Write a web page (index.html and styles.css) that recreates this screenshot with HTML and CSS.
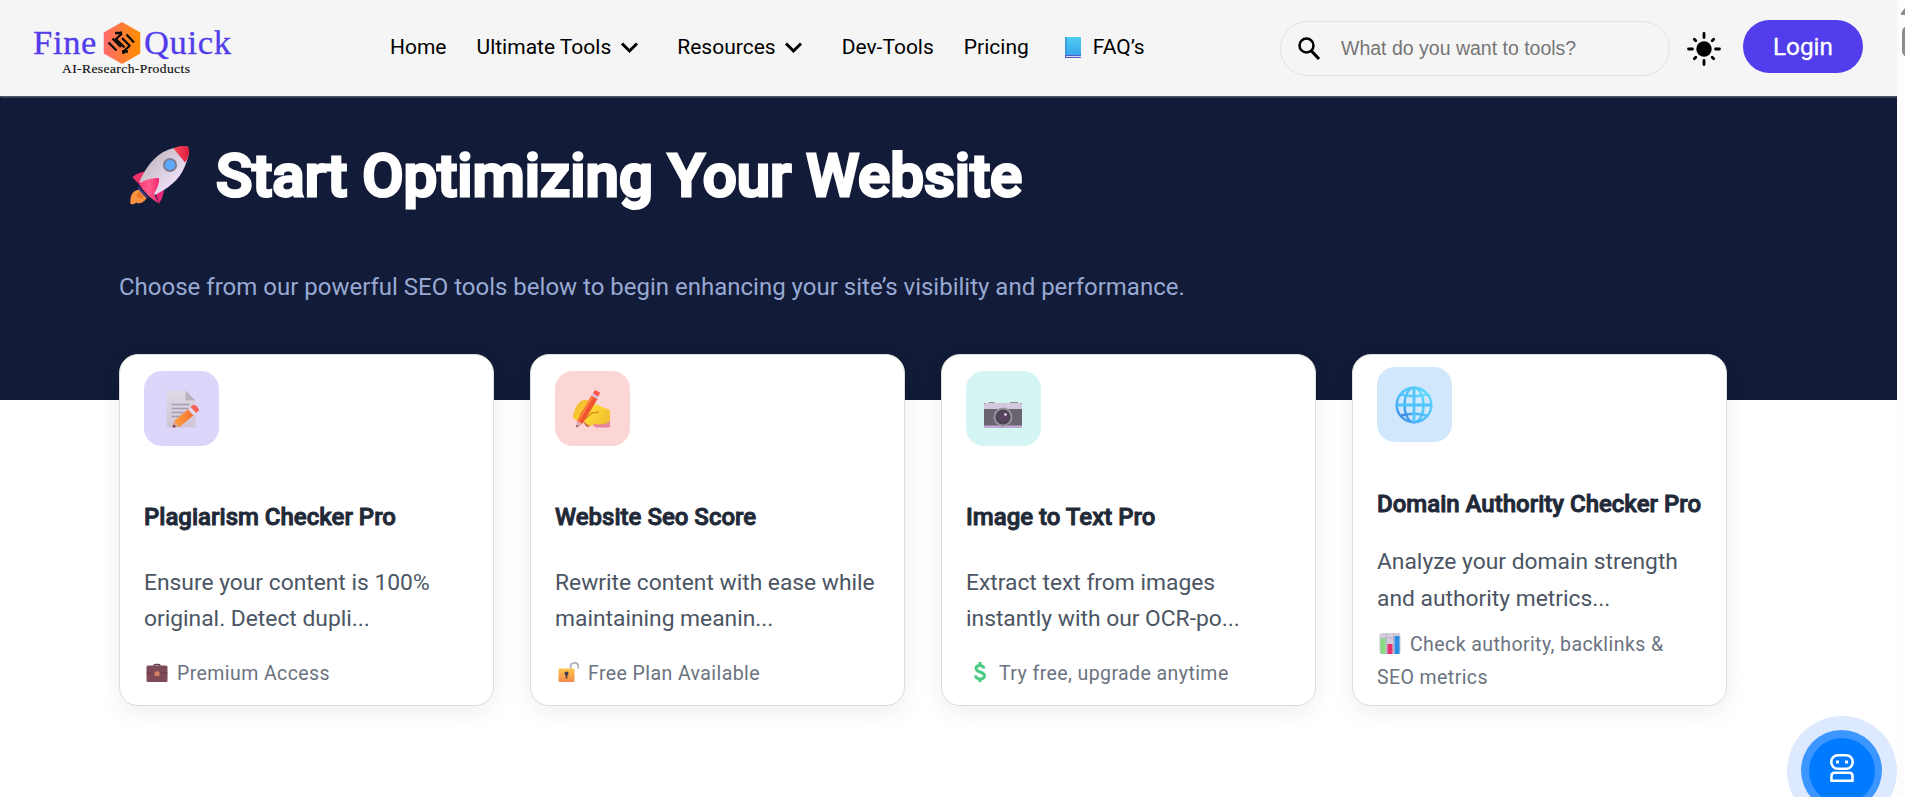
FILE: index.html
```html
<!DOCTYPE html>
<html lang="en">
<head>
<meta charset="utf-8">
<title>Fine Quick</title>
<link rel="stylesheet" href="styles.css">
</head>
<body>
<div class="page">
  <div class="main">
    <header class="header">
      <div class="logo">
        <div class="logo-row">
          <span class="logo-word logo-fine">Fine</span>
          <svg class="logo-mark" width="38" height="42" viewBox="0 0 38 42">
            <defs><linearGradient id="lg" x1="0" x2="1"><stop offset="0" stop-color="#ff6b6b"/><stop offset="1" stop-color="#ff8c00"/></linearGradient></defs>
            <path d="M19 1 36.500 11v20L19 41 1.500 31V11z" fill="url(#lg)" stroke="url(#lg)" stroke-width="1.500" stroke-linejoin="round"/>
            <g fill="none" stroke="#0b0b0b" stroke-width="2.300">
              <path d="M5.500 20.500 13.500 28.500M9.500 16.500 18 25M23.500 12.500 31 20.500M19 16 27 24M18 9.500v4M12 11h6"/>
              <path d="M18 12.500 13 17l8.500 8.500M27 23.500l-6 5.500M20.500 28v4M19 29.500h6"/>
            </g>
          </svg>
          <span class="logo-word">Quick</span>
        </div>
        <div class="logo-sub">AI-Research-Products</div>
      </div>
      <nav class="nav">
        <a>Home</a>
        <a>Ultimate Tools<svg class="chev" width="19" height="13" viewBox="0 0 19 13"><path d="M2 2.500l7.500 7.500L17 2.500" fill="none" stroke="#000" stroke-width="3"/></svg></a>
        <a>Resources<svg class="chev chev-near" width="19" height="13" viewBox="0 0 19 13"><path d="M2 2.500l7.500 7.500L17 2.500" fill="none" stroke="#000" stroke-width="3"/></svg></a>
        <a>Dev-Tools</a>
        <a>Pricing</a>
        <a class="faq"><svg class="book" width="16" height="21" viewBox="0 0 16 21"><defs><linearGradient id="bk" x2="0" y2="1"><stop stop-color="#50cdf2"/><stop offset="1" stop-color="#36a5ee"/></linearGradient></defs><path fill="url(#bk)" d="M0 0h16v18H0z"/><path fill="#3c98d6" d="M0 0h1.500v18H0z"/><path fill="#4b62c4" d="M0 18h16v3H0z"/><path fill="#dcd3f2" d="M1 19h15v1H1z"/></svg>FAQ’s</a>
      </nav>
      <div class="search">
        <svg width="24" height="26" viewBox="0 0 24 26"><circle cx="9.500" cy="9.500" r="7" fill="none" stroke="#000" stroke-width="2.500"/><path d="M14.500 15 22 23" stroke="#000" stroke-width="3"/></svg>
        <span>What do you want to tools?</span>
      </div>
      <svg class="sun" width="34" height="34" viewBox="0 0 34 34"><circle cx="17" cy="17" r="7.700"/><path d="M17 1.500v4M17 28.500v4M1.500 17h4M28.500 17h4M7.300 7.300l1.500 1.500M25.200 25.200l1.500 1.500M7.300 26.700l1.500-1.500M25.200 8.800l1.500-1.500" stroke="#000" stroke-width="2.800" stroke-linecap="round"/></svg>
      <button class="login">Login</button>
    </header>
    <section class="hero">
      <h1><svg class="rocket" width="60" height="60" viewBox="0 0 60 60">
        <defs><linearGradient id="rb" x1="0" y1="0" x2="1" y2="1"><stop offset=".2" stop-color="#c3b9bf"/><stop offset=".7" stop-color="#eadcf4"/></linearGradient><linearGradient id="rr" x1="0" x2="1"><stop stop-color="#f9377a"/><stop offset=".5" stop-color="#ff5b8c"/><stop offset="1" stop-color="#f5256f"/></linearGradient><linearGradient id="rn" x1="0" x2="1"><stop stop-color="#ff4a58"/><stop offset="1" stop-color="#d91d3e"/></linearGradient></defs>
        <path fill="#fb923f" d="M8 44c-6 2-7 8-6.500 14 2 .6 4 .2 6-1.500 1 1.800 7.500 1 10-4.500l-7-8z"/>
        <path fill="#e97824" d="M10 46c-3 3-3 5 0 6 3 1 3 1 5-1z"/>
        <path fill="#ee3069" d="M3.500 31.500C6 28 11 26 17 25.500L11 39z"/>
        <path fill="#e62a78" d="M26 46l9-5c0 7-2 12-5 16.500z"/>
        <path fill="url(#rb)" d="M10.500 36C17 20 29 5 45 2c5-1 9-1 13.500-1.500C62 6 58 14 56 20 50 35 39 42 26 49z"/>
        <path fill="url(#rn)" d="M44.500 2.500C51-1 57-.5 59.500 1.500 61 5 60 11 56 16.500z"/>
        <path fill="#413d86" d="M9 40l11 12-4-1-7-8z"/>
        <path fill="url(#rr)" d="M10 38c5-4 12-6 20-6 1 6-4 14-5 16l5 9.500c-7-4-15-11-20-19.500z"/>
        <circle cx="41" cy="19" r="7" fill="#7b7a92"/><circle cx="41" cy="19" r="5" fill="#5aa9ff"/>
      </svg><span>Start Optimizing Your Website</span></h1>
      <p>Choose from our powerful SEO tools below to begin enhancing your site’s visibility and performance.</p>
    </section>
    <section class="cards">
      <article class="card">
        <div class="tile violet"><svg width="38" height="38" viewBox="0 0 38 38"><defs><linearGradient id="pg" x2="0" y2="1"><stop stop-color="#dfdae6"/><stop offset="1" stop-color="#cfc4d6"/></linearGradient><linearGradient id="pn" x1="0" x2="1"><stop stop-color="#ffa03e"/><stop offset="1" stop-color="#f36d32"/></linearGradient></defs><path fill="url(#pg)" d="M4.500.500h19l10 10V37.500h-29z"/><path fill="#b9b2c0" d="M23.500.500l10 10h-10z"/><path d="M9.500 14.500h18M9.500 18.500h17M9.500 22.500h12M9.500 26.500h9" stroke="#a59daf" stroke-width="1.700"/><path fill="#d9a28c" d="M10.500 37.500l1.500-7 5.500 6z"/><path fill="#6b2d4e" d="M10.500 37.500l1-3 2.500 2.500z"/><path fill="url(#pn)" d="M12 31l15-12.500 5.500 6L17.500 37z"/><path fill="#e4d9ee" d="M26 19.500l3.500-3 5 6-3 3z"/><path fill="#ff6257" d="M28.500 17l2.500-2c2-1 6 3 6 5.500l-3 2.500z"/></svg></div>
        <h2>Plagiarism Checker Pro</h2>
        <p class="desc">Ensure your content is 100% original. Detect dupli...</p>
        <p class="meta"><svg width="22" height="22" viewBox="0 0 22 22"><path fill="none" stroke="#694047" stroke-width="1.500" d="M8 5.500V4.800Q8 3.500 9.500 3.500h3Q14 3.500 14 4.800v.7"/><rect x=".5" y="4.500" width="21" height="16.500" rx="1.500" fill="#7f4a58"/><path fill="#6b3d4c" d="M.5 11.500h21v1H.5z"/><rect x="8.500" y="10.500" width="5" height="4.500" rx=".5" fill="#d68060"/></svg>Premium Access</p>
      </article>
      <article class="card">
        <div class="tile pink"><svg width="38" height="38" viewBox="0 0 38 38"><defs><linearGradient id="hy" x1="0" x2="1" y2=".6"><stop stop-color="#efb229"/><stop offset=".6" stop-color="#fdd835"/><stop offset="1" stop-color="#f2bf32"/></linearGradient></defs><path fill="#e882a0" d="M18 34l19-3v5q0 1.500-3 1.500H23z"/><path fill="#cf6c52" d="M10 30l8-1-1 7q-3 2.500-5-1z"/><path fill="url(#hy)" d="M0 27c1-6 3-12 8-16 3-1.500 6-1 8 0l4 3 5 1c3 2 8 3 12 5v11c-4 4-10 4-15 3l-4 2c-4-1-6-3-8-6l-5 0c-4 0-5-2-5-3z"/><path d="M7 25l7-9M12 29l7-6 7-1" stroke="#d99022" stroke-width="1.500" fill="none"/><path fill="#f1552f" d="M18.500 5.500l6 3.500L9.500 34l-5.500-3z"/><path fill="#ff7b3e" d="M18.500 5.500l2 1.200L6 32l-2-1z"/><path fill="#d8bfe3" d="M18.500 5.500l1.500-2 5.500 3-1 2.500z"/><path fill="#fb5547" d="M20 3.500l2-3.500 5 2.500-1.500 4z"/><path fill="#e7a4b0" d="M4 31l5.500 3-6 3.500z"/><path fill="#542a45" d="M3.500 35l2 1-2 1.500z"/></svg></div>
        <h2>Website Seo Score</h2>
        <p class="desc">Rewrite content with ease while maintaining meanin...</p>
        <p class="meta"><svg width="22" height="22" viewBox="0 0 22 22"><defs><linearGradient id="lk" x2="0" y2="1"><stop stop-color="#fbc54a"/><stop offset="1" stop-color="#f58a4f"/></linearGradient></defs><path d="M13.500 7.500V6c0-5 7.500-6 8 0v1.500" fill="none" stroke="#b9b0c4" stroke-width="2"/><rect x="1.500" y="7.500" width="16" height="13.500" rx="1" fill="url(#lk)"/><circle cx="9.500" cy="12.500" r="2" fill="#46364a"/><path fill="#46364a" d="M8.700 13h1.600v4.500H8.700z"/></svg>Free Plan Available</p>
      </article>
      <article class="card">
        <div class="tile mint"><svg width="38" height="38" viewBox="0 0 38 38"><path fill="#8e8a92" d="M4.500 12h6v2h-6zM26 12h8v2h-8z"/><rect y="13" width="38" height="24.500" rx="1" fill="#69646f"/><path fill="#d4c8df" d="M2 13h34q2 0 2 2v4H0v-4q0-2 2-2z"/><path fill="#c7a9d9" d="M0 35.500h38V37q0 .5-1 .5H1Q0 37.500 0 37z"/><circle cx="19" cy="27" r="9.500" fill="#96919c"/><circle cx="19" cy="27" r="7.500" fill="#4a4450"/><circle cx="19" cy="27" r="5" fill="#5c4564"/><circle cx="21.500" cy="24.500" r="1.300" fill="#efe8f4"/></svg></div>
        <h2>Image to Text Pro</h2>
        <p class="desc">Extract text from images instantly with our OCR-po...</p>
        <p class="meta"><svg width="22" height="22" viewBox="0 0 22 22"><path fill="none" stroke="#4cc983" stroke-width="3" d="M16 7.500C15.500 3.500 8 3.500 8 7.200c0 4.600 8.500 3 8.500 7.600 0 4.200-8.500 4.200-9-.5M12 1v3.500M12 17.500V21"/></svg>Try free, upgrade anytime</p>
      </article>
      <article class="card tall">
        <div class="tile sky"><svg width="38" height="38" viewBox="0 0 38 38"><defs><linearGradient id="gl" x1="1" x2="0" y2="1"><stop stop-color="#62dcfb"/><stop offset=".6" stop-color="#4dbcfa"/><stop offset="1" stop-color="#3f85e0"/></linearGradient></defs><g fill="none" stroke="url(#gl)" stroke-width="2.500"><circle cx="19" cy="19" r="17.300"/><ellipse cx="19" cy="19" rx="9.500" ry="17.300"/><path d="M6 8.500q13 3.500 26 0M6 29.500q13-3.500 26 0"/></g><path d="M19 1.500v35M1.500 19h35" stroke="#4fc3fb" stroke-width="2.800"/></svg></div>
        <h2>Domain Authority Checker Pro</h2>
        <p class="desc">Analyze your domain strength and authority metrics...</p>
        <p class="meta"><svg width="22" height="22" viewBox="0 0 22 22"><rect x=".5" width="21" height="21" rx="2" fill="#d3ccda"/><path d="M7.500 0v21M14.500 0v21M.5 5h21" stroke="#bdb4c6"/><path fill="#86dc7e" d="M1.500 5.500h5V21H3q-1.500 0-1.500-1.500z"/><path fill="#e7326f" d="M8.500 11h5v10h-5z"/><path fill="#2c8de4" d="M15.500 3h5v18h-5z"/></svg>Check authority, backlinks &amp; SEO metrics</p>
      </article>
    </section>
  </div>
  <div class="scrollbar"><svg width="8" height="16" viewBox="0 0 8 16"><path fill="#8b8b8b" d="M4 15v-2l4-5v7z"/></svg><div class="thumb"></div></div>
  <div class="bot"><div class="bot-ring"><div class="bot-core"><svg width="24" height="28" viewBox="0 0 24 28" fill="none" stroke="#fff" stroke-width="2.500"><rect x="1.300" y="1.300" width="21.400" height="13.400" rx="6.500"/><path d="M1.500 26.700V22q0-3.300 3-3.300h15q3 0 3 3.300v4.700z"/><path stroke="none" fill="#fff" d="M6 6.500h3v3H6zM15 6.500h3v3h-3z"/></svg></div></div></div>
</div>
</body>
</html>
```
FILE: styles.css
```css
* { box-sizing: border-box; margin: 0; padding: 0; }
body { font-family: Roboto, "Liberation Sans", sans-serif; background: #fff; overflow: hidden; }
.page { position: relative; display: flex; width: 1905px; height: 797px; overflow: hidden; }
.main { width: 1897px; background: #fff; }
.header { display: flex; align-items: flex-start; height: 96px; padding-left: 33px; background: #f5f5f5; position: relative; box-shadow: 0 1px 2px rgba(255,255,255,.4); }
.logo { width: 200px; padding-top: 22px; font-family: "Liberation Serif", serif; }
.logo-row { display: flex; height: 42px; }
.logo-word { margin-top: -1px; font-size: 34.500px; line-height: 42px; letter-spacing: .7px; color: #513deb; -webkit-text-stroke: .3px #513deb; }
.logo-fine { width: 70px; }
.logo-mark { margin-right: 3px; flex: none; }
.logo-sub { margin: -3px 0 0 29px; font-size: 13.500px; line-height: 16px; letter-spacing: .42px; color: #111; -webkit-text-stroke: .2px #111; white-space: nowrap; position: relative; }
.nav { display: flex; width: 889px; margin-left: 157px; padding-top: 32px; gap: 30px; font-size: 21px; line-height: 30px; color: #000; white-space: nowrap; }
.nav a { display: flex; align-items: center; }
.chev { margin: 1px 8px 0 9px; }
.chev-near { margin-right: 9px; margin-left: 8px; }
.book { margin-right: 12px; }
.faq { margin-left: 6px; }
.search { display: flex; align-items: center; width: 390px; height: 55px; margin: 21px 0 0 1px; padding-left: 16px; border: 1px solid #e0dfee; border-radius: 28px; font-family: "Liberation Sans", sans-serif; font-size: 19.500px; color: #757575; }
.search span { margin-left: 20px; }
.sun { margin: 32px 0 0 17px; }
.login { width: 120px; height: 53px; margin: 20px 0 0 22px; border: 0; border-radius: 27px; background: #513deb; color: #fff; font: 400 24.300px Roboto, sans-serif; -webkit-text-stroke: .3px #fff; }
.hero { height: 304px; padding: 48px 0 0 119px; background: #121b37; color: #fff; }
.hero h1 { display: flex; align-items: center; height: 64px; font-size: 60px; font-weight: 500; line-height: 64px; -webkit-text-stroke: 3px #fff; white-space: nowrap; }
.rocket { margin: 0 27px 0 10px; }
.hero p { margin-top: 61px; font-size: 24px; line-height: 36px; color: #98a9d3; white-space: nowrap; }
.cards { display: grid; grid-template-columns: repeat(4, 375px); gap: 36px; margin: -46px 0 0 119px; }
.card { height: 352px; padding: 16px 24px 0 24px; border: 1px solid #ddd; border-radius: 19px; background: #fff; box-shadow: 0 6px 24px rgba(0,0,0,.07); position: relative; }
.tile { display: grid; place-items: center; width: 75px; height: 75px; padding-right: 1px; border-radius: 18px; }
.violet { background: #ddd6fb; }
.pink { background: #fcd5d5; }
.mint { background: #d5f4f4; }
.sky { background: #d1e8fc; }
.card h2 { margin-top: 56px; font-size: 24px; line-height: 30px; font-weight: 500; -webkit-text-stroke: .9px #1f2937; color: #1f2937; white-space: nowrap; }
.desc { margin-top: 33px; font-size: 22.800px; line-height: 36px; color: #4b5563; }
.meta { margin-top: 20px; font-size: 19.500px; line-height: 33px; letter-spacing: .42px; color: #6b7280; }
.meta svg { margin: 0 9px 0 2px; vertical-align: -3px; }
.tall { padding-top: 12px; }
.tall h2 { margin-top: 47px; }
.tall .desc { margin-top: 25px; line-height: 36.600px; }
.tall .meta { margin-top: 11px; }
.tall .meta svg { vertical-align: -4px; }
.scrollbar { width: 8px; background: #fcfcfc; overflow: hidden; }
.scrollbar svg { display: block; }
.thumb { width: 12px; height: 31px; margin: 10px 0 0 5px; border-radius: 6px; background: #8b8b8b; }
.bot { position: absolute; left: 1787px; top: 716px; display: grid; place-items: center; width: 110px; height: 110px; border-radius: 50%; background: #dde9ff; }
.bot-ring { display: grid; place-items: center; width: 81px; height: 81px; margin: -1px 0 0 -1px; border-radius: 50%; background: #3c96ff; }
.bot-core { display: grid; place-items: center; width: 66px; height: 66px; border-radius: 50%; background: #007bff; }
.bot-core svg { margin-top: -5px; }
```
